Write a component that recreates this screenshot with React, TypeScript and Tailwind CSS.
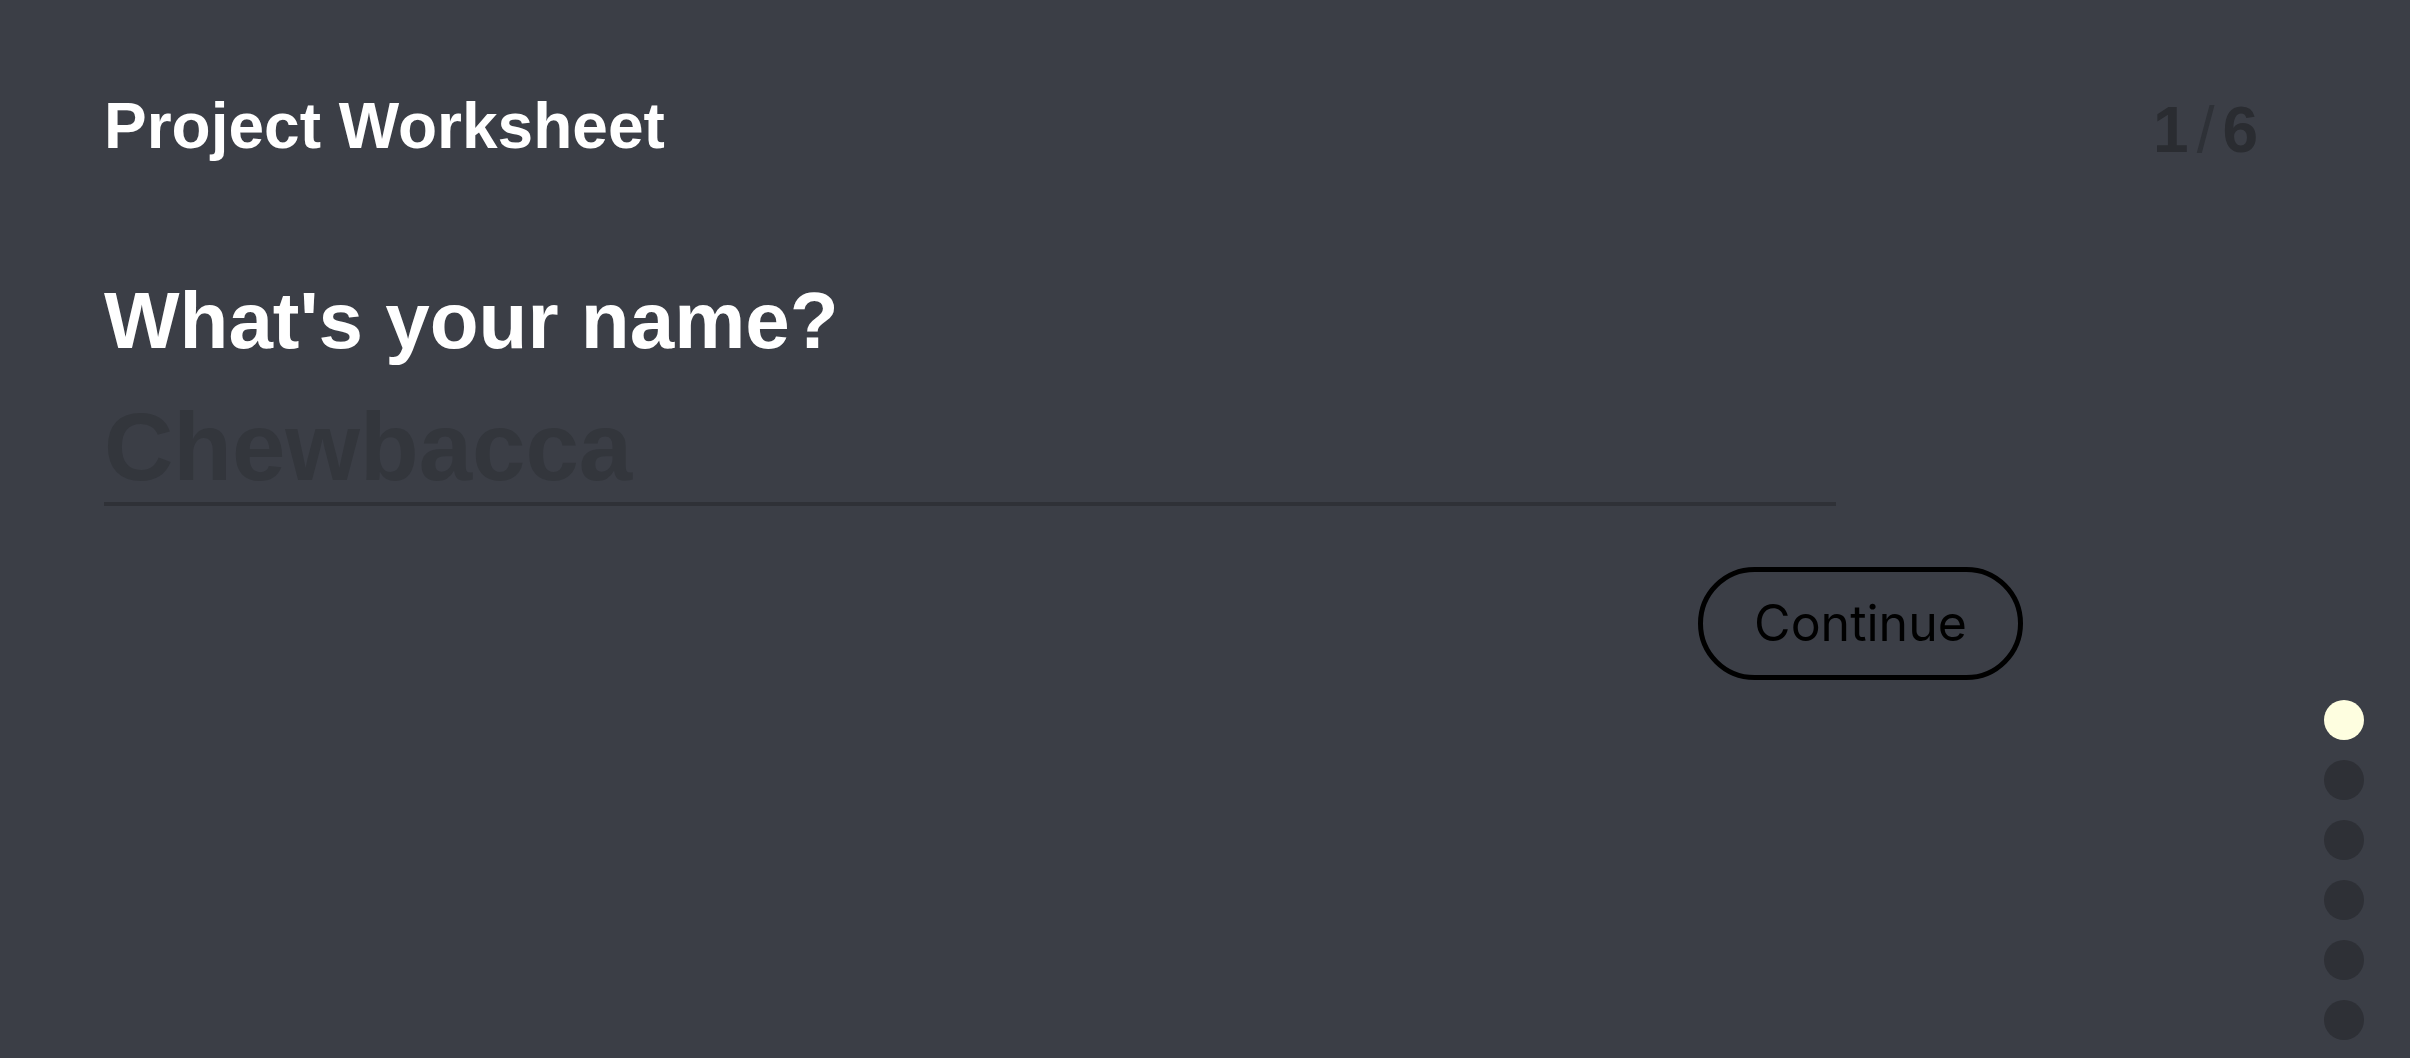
import { useState } from 'react'

const STEPS = 6

export default function App() {
  const [name, setName] = useState('')
  const current = 0

  return (
    <div className="flex min-h-screen w-full bg-[#3b3e46] font-['Liberation_Sans',Arial,sans-serif]">
      <main className="flex-1 pl-[104px] pt-[90px]">
        {/* Header */}
        <div className="flex items-start justify-between pr-[20px]">
          <h1 className="text-[64px] font-bold leading-[72px] text-white">Project Worksheet</h1>
          <div className="mt-[4px] text-[64px] font-bold leading-[72px] text-[#2a2c31]">
            1<span className="mx-[8px] font-normal text-[#2e3137]">/</span>6
          </div>
        </div>

        {/* Question */}
        <form
          className="mt-[111px] flex w-[1919px] flex-col"
          onSubmit={(e) => e.preventDefault()}
        >
          <label htmlFor="name" className="text-[80px] font-bold leading-[88px] text-white">
            What's your name?
          </label>
          <input
            id="name"
            value={name}
            onChange={(e) => setName(e.target.value)}
            placeholder="Chewbacca"
            className="mt-[27px] h-[114px] w-[1732px] border-b-4 border-[#2f3137] bg-transparent p-0 text-[96px] font-bold text-white placeholder:text-[#33363c] focus:outline-none"
          />
          <button
            type="submit"
            className="mt-[61px] flex h-[113px] w-[325px] items-center justify-center self-end rounded-full border-[5px] border-black font-['Inter',sans-serif] text-[50px] text-black"
          >
            Continue
          </button>
        </form>
      </main>

      {/* Step dots */}
      <nav className="flex w-[132px] flex-col items-center gap-5 pt-[700px]">
        {Array.from({ length: STEPS }).map((_, i) => (
          <span
            key={i}
            className={
              i === current
                ? 'h-10 w-10 rounded-full bg-[#fefee0]'
                : 'h-10 w-10 rounded-full bg-[#2e3036]'
            }
          />
        ))}
      </nav>
    </div>
  )
}
